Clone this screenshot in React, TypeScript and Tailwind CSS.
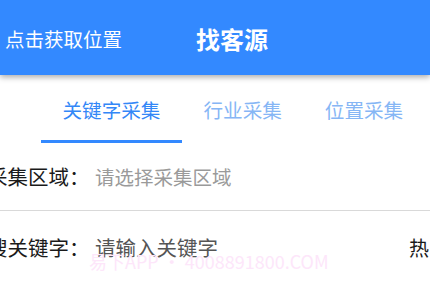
import React from 'react';

const font = { fontFamily: '"Noto Sans CJK SC", "Noto Sans", sans-serif' };

export default function App() {
  const tabs = ['关键字采集', '行业采集', '位置采集'];
  return (
    <div className="w-[430px] h-[283px] overflow-hidden bg-white relative" style={font}>
      {/* Header */}
      <div className="relative z-10 h-[75px] bg-[#3389ff] shadow-[0_2px_6px_rgba(0,0,0,0.35)] flex items-center">
        <span className="pl-[5px] pt-[2px] text-white text-[19.5px] leading-none w-[140px] whitespace-nowrap">
          点击获取位置
        </span>
        <span className="ml-[56px] pt-[2px] text-white text-[24px] font-bold leading-none">找客源</span>
      </div>

      {/* Tabs */}
      <div className="flex pl-[41px] pt-[19px] whitespace-nowrap">
        {tabs.map((t, i) => (
          <div key={t} className="flex flex-col items-center">
            <span
              className={
                'px-[21.5px] h-[32px] leading-[32px] text-[19.6px] ' +
                (i === 0 ? 'text-[#3387f7]' : 'text-[#86b6f5]')
              }
            >
              {t}
            </span>
            <div className={'mt-[14px] h-[3px] w-full ' + (i === 0 ? 'bg-[#3389ff]' : 'bg-transparent')} />
          </div>
        ))}
      </div>

      {/* Rows */}
      <div className="mt-[19px] flex items-center h-[29px] whitespace-nowrap">
        <span className="ml-[-13px] w-[108px] text-[20.5px] text-[#1a1a1a]">采集区域：</span>
        <span className="text-[19.5px] text-[#9a9a9a]">请选择采集区域</span>
      </div>
      <div className="mt-[19px] h-px bg-[#d9d9d9]" />
      <div className="mt-[22px] flex items-center h-[29px] whitespace-nowrap relative">
        <span className="ml-[-13px] w-[108px] text-[20.5px] text-[#1a1a1a]">搜关键字：</span>
        <span className="text-[20.5px] text-[#555]">请输入关键字</span>
        <span className="absolute left-[409px] text-[20px] text-[#1a1a1a]">热门</span>
      </div>

      {/* Watermark */}
      <div className="absolute left-[89px] top-[248px] text-[18px] text-[#fde6fa] whitespace-nowrap">
        易下APP · 4008891800.COM
      </div>
    </div>
  );
}
